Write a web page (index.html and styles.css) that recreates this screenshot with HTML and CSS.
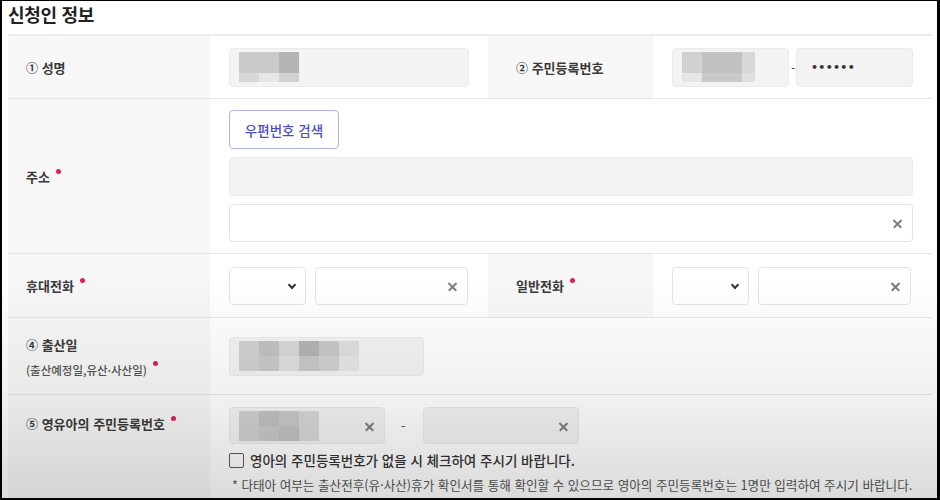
FILE: index.html
```html
<!DOCTYPE html>
<html lang="ko">
<head>
<meta charset="utf-8">
<title>신청인 정보</title>
<link rel="stylesheet" href="styles.css">
</head>
<body>
<div class="frame">
  <h2 class="title">신청인 정보</h2>
  <div class="table">
    <div class="row r1">
      <div class="lab"><span><span class="num">①</span> 성명</span></div>
      <div class="val">
        <div class="box gray w-name">
          <div class="mosaic">
            <div class="mcol"><i class="g3"></i><i class="g5"></i></div>
            <div class="mcol"><i class="g3"></i><i class="g7"></i></div>
            <div class="mcol"><i class="g1"></i><i class="g4"></i></div>
          </div>
        </div>
      </div>
      <div class="lab lab2"><span><span class="num">②</span> 주민등록번호</span></div>
      <div class="val pair">
        <div class="box gray w-jm">
          <div class="mosaic">
            <div class="mcol"><i class="g4"></i><i class="g7"></i></div>
            <div class="mcol wide"><i class="g2"></i><i class="g3"></i></div>
            <div class="mcol nar"><i class="g5"></i><i class="g6"></i></div>
          </div>
        </div>
        <span class="dash">-</span>
        <div class="box gray w-jm"><span class="dots">••••••</span></div>
      </div>
    </div>

    <div class="row r2">
      <div class="lab"><span class="req">주소</span></div>
      <div class="val span3 stack">
        <button class="btn">우편번호 검색</button>
        <div class="box gray full"></div>
        <div class="box white full clear"><span class="x"></span></div>
      </div>
    </div>

    <div class="row r3">
      <div class="lab"><span class="req">휴대전화</span></div>
      <div class="val pair">
        <div class="select"><span class="chev"></span></div>
        <div class="box white tel clear"><span class="x"></span></div>
      </div>
      <div class="lab lab2"><span class="req">일반전화</span></div>
      <div class="val pair">
        <div class="select"><span class="chev"></span></div>
        <div class="box white tel clear"><span class="x"></span></div>
      </div>
    </div>

    <div class="row r4">
      <div class="lab two">
        <div><span class="num">④</span> 출산일</div>
        <div class="sub req">(출산예정일,유산·사산일)</div>
      </div>
      <div class="val span3">
        <div class="box gray w-birth">
          <div class="mosaic">
            <div class="mcol"><i class="g4"></i><i class="g4"></i></div>
            <div class="mcol"><i class="g2"></i><i class="g3"></i></div>
            <div class="mcol"><i class="g5"></i><i class="g6"></i></div>
            <div class="mcol"><i class="g1"></i><i class="g3"></i></div>
            <div class="mcol"><i class="g3"></i><i class="g4"></i></div>
            <div class="mcol"><i class="g6"></i><i class="g7"></i></div>
          </div>
        </div>
      </div>
    </div>

    <div class="row r5">
      <div class="lab top"><span class="req"><span class="num">⑤</span> 영유아의 주민등록번호</span></div>
      <div class="val span3 stack5">
        <div class="pair">
          <div class="box gray w-baby clear">
            <div class="mosaic">
              <div class="mcol"><i class="g4"></i><i class="g4"></i></div>
              <div class="mcol"><i class="g2"></i><i class="g3"></i></div>
              <div class="mcol"><i class="g3"></i><i class="g2"></i></div>
              <div class="mcol"><i class="g5"></i><i class="g5"></i></div>
            </div>
            <span class="x"></span>
          </div>
          <span class="dash wide">-</span>
          <div class="box gray w-baby clear"><span class="x"></span></div>
        </div>
        <label class="check"><span class="cb"></span>영아의 주민등록번호가 없을 시 체크하여 주시기 바랍니다.</label>
        <p class="note">* 다태아 여부는 출산전후(유·사산)휴가 확인서를 통해 확인할 수 있으므로 영아의 주민등록번호는 1명만 입력하여 주시기 바랍니다.</p>
      </div>
    </div>
  </div>
  <div class="shade"></div>
</div>
</body>
</html>
```

FILE: styles.css
```css
* { box-sizing: border-box; }
html, body { margin: 0; padding: 0; background: #000; }
body {
  font-family: "Noto Sans CJK KR", "Noto Sans", sans-serif;
  color: #333;
}
.frame {
  position: relative;
  width: 940px;
  height: 500px;
  overflow: hidden;
  background: #fff;
  border-style: solid;
  border-color: #000;
  border-width: 1px 3px 2px 2px;
  padding: 0 0 0 6px;
}
.title {
  margin: 0;
  height: 33px;
  font-size: 18px;
  line-height: 26px;
  font-weight: 700;
  color: #222;
  letter-spacing: -0.3px;
}
.table {
  width: 924px;
  border-top: 2px solid #ebebeb;
}
.row {
  display: grid;
  grid-template-columns: 202px 278px 165px 279px;
  border-bottom: 1px solid #e6e6e6;
}
.r1 { height: 63px; }
.r2 { height: 155px; }
.r3 { height: 64px; }
.r4 { height: 77px; }
.r5 { height: 120px; border-bottom: none; }

.lab {
  background: #f7f7f7;
  display: flex;
  align-items: center;
  padding-left: 18px;
  font-size: 13px;
  font-weight: 700;
  color: #3a3a3a;
  white-space: nowrap;
}
.lab2 { padding-left: 28px; }
.lab.two { flex-direction: column; align-items: flex-start; justify-content: center; gap: 7px; }
.lab.top { align-items: flex-start; padding-top: 19px; }
.lab .sub { font-size: 11.5px; font-weight: 500; color: #555; }
.num { font-size: 12px; font-weight: 700; }
.req::after {
  content: "";
  display: inline-block;
  width: 5px;
  height: 5px;
  border-radius: 50%;
  background: #dc2157;
  margin-left: 6px;
  vertical-align: 8px;
}
.lab .sub.req::after { vertical-align: 9px; }

.val {
  display: flex;
  align-items: center;
  padding: 0 19px 0 19px;
  background: #fff;
}
.span3 { grid-column: 2 / 5; }
.pair { display: flex; align-items: center; gap: 9px; }
.stack {
  flex-direction: column;
  align-items: stretch;
  justify-content: flex-start;
  padding-top: 11px;
  gap: 8px;
}
.stack5 {
  flex-direction: column;
  align-items: flex-start;
  justify-content: flex-start;
  padding-top: 12px;
}

.box {
  position: relative;
  height: 39px;
  border-radius: 4px;
  border: 1px solid #ebebeb;
  display: flex;
  align-items: center;
}
.gray { background: #f3f3f3; }
.white { background: #fff; border-color: #e4e4e4; }
.w-name { width: 241px; }
.w-jm { width: 117px; }
.full { width: 100%; }
.stack .white { height: 38px; }
.tel { width: 153px; height: 38px; }
.w-birth { width: 195px; }
.w-baby { width: 156px; height: 37px; }

.mosaic {
  display: flex;
  margin-left: 9px;
  height: 30px;
}
.mcol { display: flex; flex-direction: column; width: 20px; }
.mcol.wide { width: 40px; }
.mcol.nar { width: 13px; }
.mcol i { display: block; }
.mcol i:first-child { height: 21px; }
.mcol i:last-child { height: 9px; }
.w-birth .mcol i:first-child, .w-baby .mcol i:first-child { height: 15px; }
.w-birth .mcol i:last-child, .w-baby .mcol i:last-child { height: 15px; }
.g1 { background: #b4b4b4; }
.g2 { background: #c2c2c2; }
.g3 { background: #c9c9c9; }
.g4 { background: #d1d1d1; }
.g5 { background: #d8d8d8; }
.g6 { background: #dfdfdf; }
.g7 { background: #e6e6e6; }

.dots {
  margin-left: 14px;
  font-size: 11px;
  letter-spacing: 0.3px;
  font-weight: 700;
  color: #333;
  font-family: "DejaVu Sans", sans-serif;
}
.dash { color: #555; font-size: 13px; width: 0; margin: 0 -4px 0 -7px; }
.dash.wide { width: auto; margin: 0 8px 0 7px; }

.btn {
  width: 110px;
  height: 39px;
  background: #fff;
  border: 1.5px solid #aeb0e8;
  border-radius: 4px;
  color: #4b4fbf;
  font-family: "Noto Sans CJK KR", sans-serif;
  font-size: 13.5px;
  font-weight: 500;
  padding: 0;
}

.x {
  position: absolute;
  right: 10px;
  top: 50%;
  width: 9px;
  height: 9px;
  margin-top: -4px;
}
.x::before, .x::after {
  content: "";
  position: absolute;
  left: -1px;
  top: 4px;
  width: 11px;
  height: 1.5px;
  background: #7d7d7d;
  transform: rotate(45deg);
}
.x::after { transform: rotate(-45deg); }

.select {
  position: relative;
  width: 77px;
  height: 38px;
  border: 1px solid #e4e4e4;
  border-radius: 4px;
  background: #fff;
}
.chev {
  position: absolute;
  right: 10px;
  top: 14px;
  width: 6px;
  height: 6px;
  border-right: 2px solid #333;
  border-bottom: 2px solid #333;
  transform: rotate(45deg);
}

.check {
  display: flex;
  align-items: center;
  gap: 6px;
  margin-top: 6px;
  font-size: 13.5px;
  font-weight: 500;
  color: #333;
  white-space: nowrap;
}
.cb {
  width: 15px;
  height: 15px;
  border: 1.5px solid #5a5a5a;
  border-radius: 2px;
  background: #fff;
}
.note {
  margin: 5px 0 0 3px;
  font-size: 12.6px;
  color: #555;
  white-space: nowrap;
}

.shade {
  position: absolute;
  inset: 0;
  pointer-events: none;
  background: linear-gradient(to bottom, rgba(0,0,0,0) 55%, rgba(0,0,0,0.06) 80%, rgba(0,0,0,0.14) 100%);
}
```
